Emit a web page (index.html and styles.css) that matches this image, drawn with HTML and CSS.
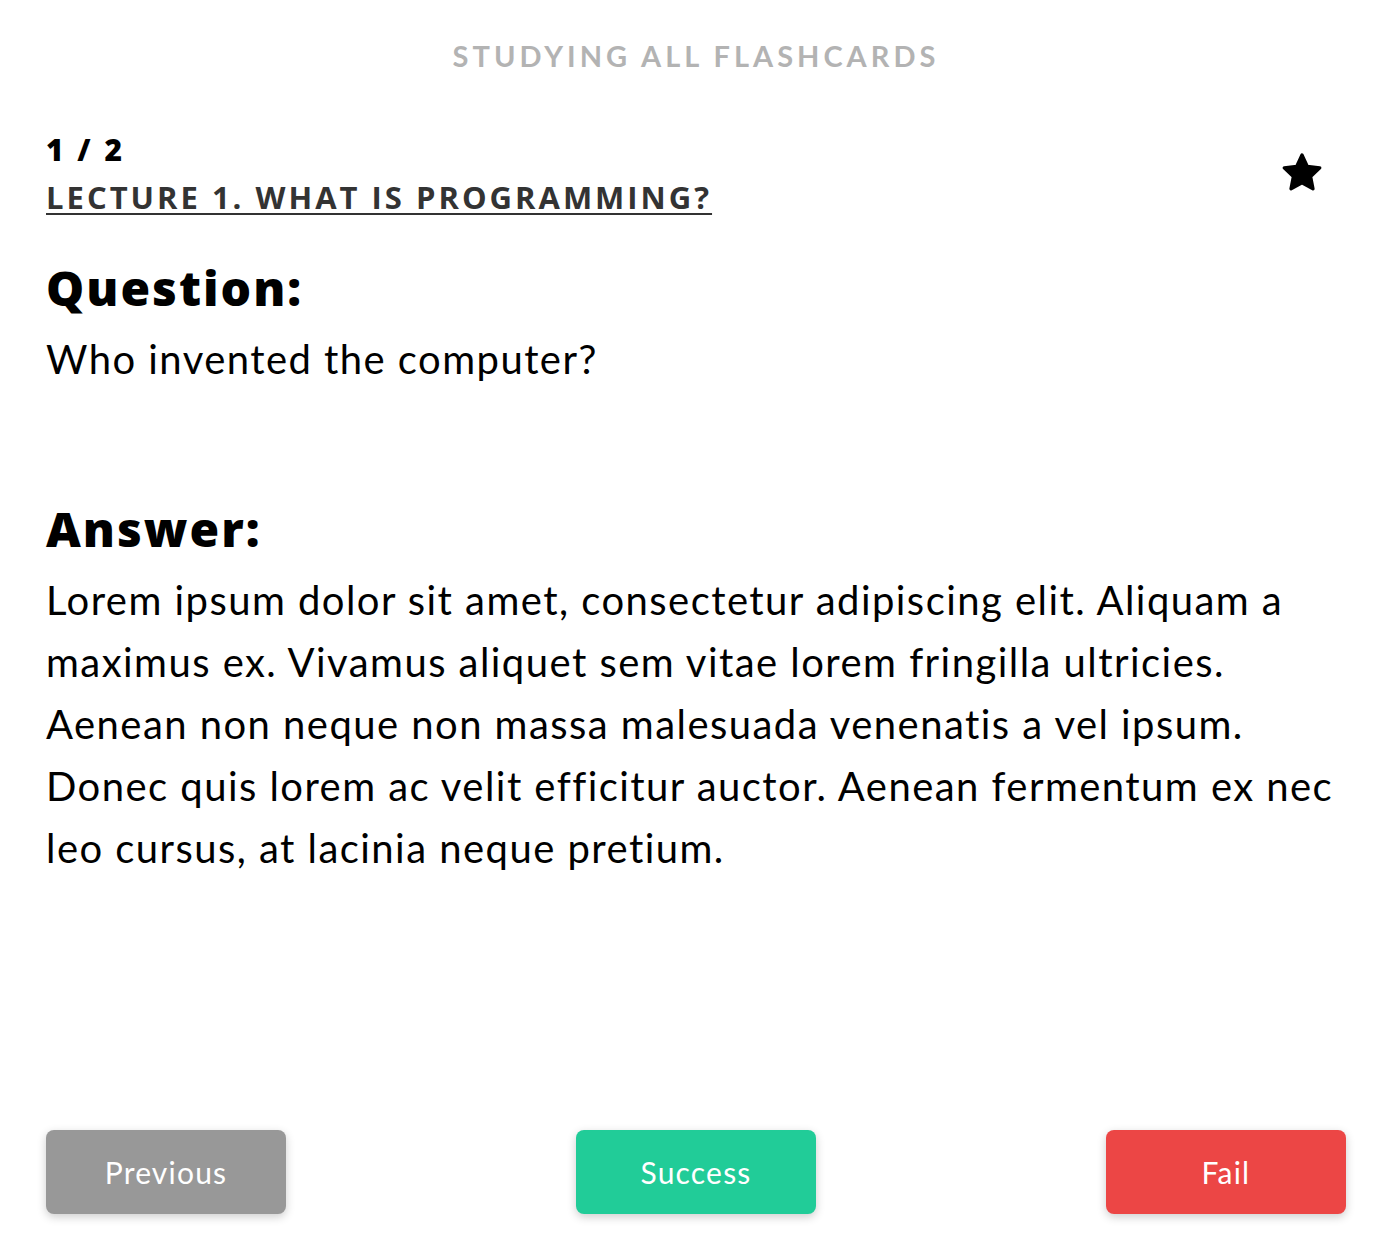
FILE: index.html
```html
<!DOCTYPE html>
<html lang="en">
<head>
<meta charset="utf-8">
<title>Studying all flashcards</title>
<link rel="stylesheet" href="styles.css">
</head>
<body>
<div class="page">
  <header class="top">
    <h1 class="title">STUDYING ALL FLASHCARDS</h1>
  </header>
  <section class="meta">
    <div class="meta-left">
      <div class="counter">1 / 2</div>
      <a class="lecture" href="#">LECTURE 1. WHAT IS PROGRAMMING?</a>
    </div>
    <svg class="star" viewBox="0 0 24 24" width="44" height="44" aria-hidden="true">
      <path d="M12 2.2l2.9 6.2 6.8.8-5 4.7 1.3 6.7L12 17.3l-6 3.3 1.3-6.7-5-4.7 6.8-.8z" fill="#000" stroke="#000" stroke-width="1.8" stroke-linejoin="round"/>
    </svg>
  </section>
  <section class="block">
    <h2 class="label">Question:</h2>
    <p class="text">Who invented the computer?</p>
  </section>
  <section class="block answer">
    <h2 class="label">Answer:</h2>
    <p class="text">Lorem ipsum dolor sit amet, consectetur adipiscing elit. Aliquam a maximus ex. Vivamus aliquet sem vitae lorem fringilla ultricies. Aenean non neque non massa malesuada venenatis a vel ipsum. Donec quis lorem ac velit efficitur auctor. Aenean fermentum ex nec leo cursus, at lacinia neque pretium.</p>
  </section>
  <footer class="actions">
    <button class="btn btn-prev">Previous</button>
    <button class="btn btn-success">Success</button>
    <button class="btn btn-fail">Fail</button>
  </footer>
</div>
</body>
</html>
```

FILE: styles.css
```css
html, body {
  margin: 0;
  padding: 0;
  background: #fff;
}
body {
  font-family: "Lato", "Open Sans", sans-serif;
  color: #000;
}
.page {
  box-sizing: border-box;
  min-height: 1260px;
  padding: 0 46px 46px;
  display: flex;
  flex-direction: column;
}
.top {
  text-align: center;
  padding-top: 36px;
}
.title {
  margin: 0;
  font-family: "Lato", sans-serif;
  font-size: 29px;
  line-height: 40px;
  font-weight: 700;
  letter-spacing: 4px;
  color: #b3b3b3;
}
.meta {
  display: flex;
  justify-content: space-between;
  align-items: center;
  margin-top: 56px;
}
.meta-left {
  display: flex;
  flex-direction: column;
  align-items: flex-start;
}
.counter {
  font-family: "Open Sans", sans-serif;
  font-size: 30px;
  line-height: 36px;
  font-weight: 800;
  letter-spacing: 3px;
}
.lecture {
  margin-top: 4px;
  font-family: "Open Sans", sans-serif;
  font-size: 31px;
  line-height: 50px;
  font-weight: 700;
  letter-spacing: 3px;
  color: #333;
  text-decoration: underline;
  text-underline-offset: 4px;
  text-decoration-thickness: 2px;
}
.star {
  margin-right: 22px;
  margin-bottom: 8px;
}
.block {
  margin-top: 36px;
}
.label {
  margin: 0;
  font-family: "Open Sans", sans-serif;
  font-size: 48px;
  line-height: 60px;
  font-weight: 800;
  letter-spacing: 2px;
  font-variant-ligatures: none;
}
.text {
  margin: 10px 0 0;
  font-size: 40px;
  line-height: 62px;
  font-weight: 400;
  letter-spacing: 1.45px;
}
.answer {
  margin-top: 109px;
}
.actions {
  margin-top: auto;
  display: flex;
  justify-content: space-between;
}
.btn {
  width: 240px;
  height: 84px;
  border: 0;
  border-radius: 8px;
  color: #fff;
  font-family: "Lato", sans-serif;
  font-size: 30px;
  letter-spacing: 1.2px;
  box-shadow: 0 3px 10px rgba(0, 0, 0, 0.2);
}
.btn-prev { background: #989898; }
.btn-success { background: #21cc98; }
.btn-fail { background: #ec4645; }
```
